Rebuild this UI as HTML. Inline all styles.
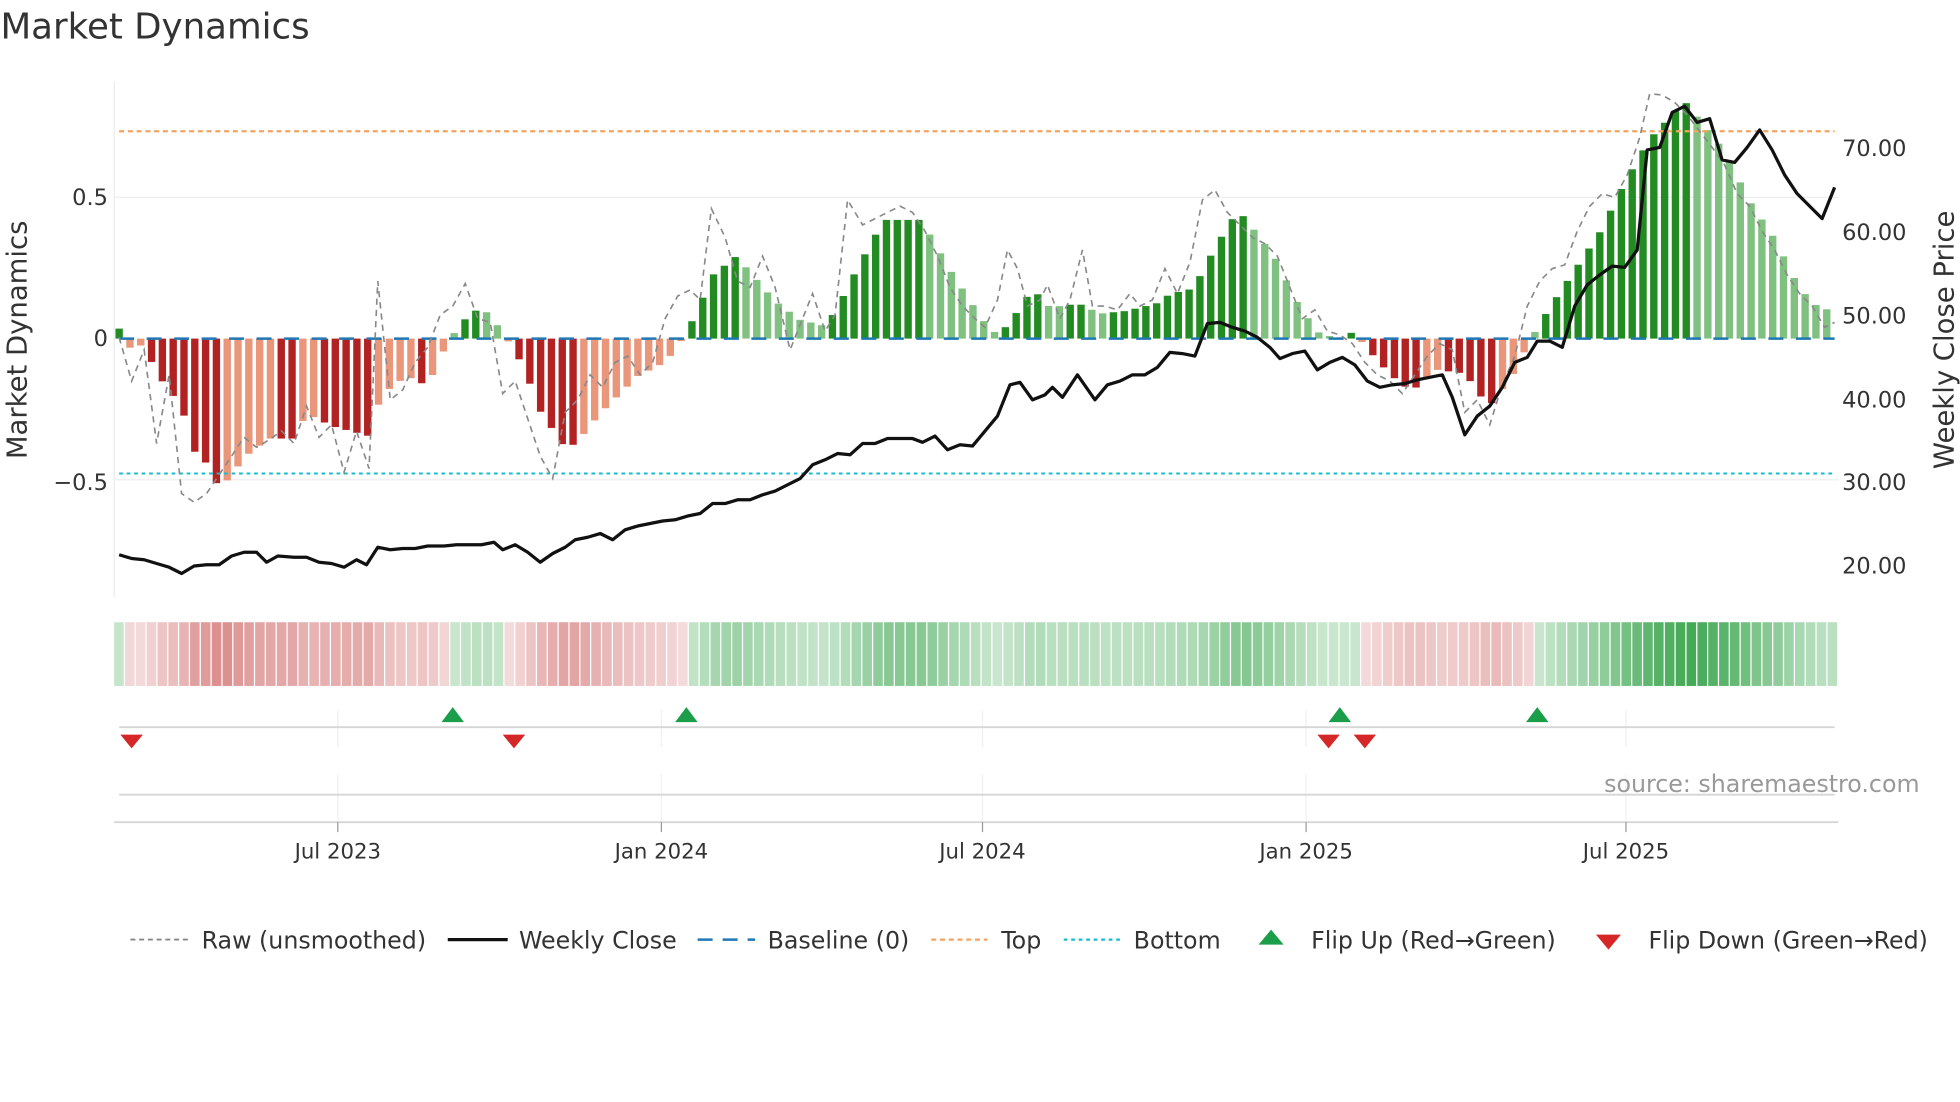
<!DOCTYPE html>
<html><head><meta charset="utf-8">
<style>
html,body{margin:0;padding:0;background:#fff;width:1960px;height:1102px;overflow:hidden}
svg{display:block}
text{font-family:"DejaVu Sans","Liberation Sans",sans-serif;fill:#333}
</style></head>
<body>
<svg id="s" width="1960" height="1102" viewBox="0 0 1568 882" xmlns="http://www.w3.org/2000/svg">
<text x="0" y="31" font-size="28.5">Market Dynamics</text>
<line x1="91" y1="65" x2="91" y2="478" stroke="#ececec"/>
<line x1="91" y1="158" x2="1471" y2="158" stroke="#eeeeee"/>
<line x1="91" y1="384" x2="1471" y2="384" stroke="#eeeeee"/>
<g id="bars"></g>
<g id="heat"></g>
<line x1="95" y1="271" x2="1468" y2="271" stroke="#1f77b4" stroke-width="2" stroke-dasharray="12,10"/>
<line x1="95" y1="105" x2="1468" y2="105" stroke="#f4a460" stroke-width="1.8" stroke-dasharray="4,3"/>
<line x1="95" y1="379" x2="1468" y2="379" stroke="#17becf" stroke-width="1.6" stroke-dasharray="3,3"/>
<polyline id="raw" fill="none" stroke="#888" stroke-width="1.3" stroke-dasharray="5,4"/>
<polyline id="close" fill="none" stroke="#111" stroke-width="2.6" stroke-linejoin="round"/>
<g font-size="18" text-anchor="end">
<text x="86" y="164">0.5</text><text x="86" y="277">0</text><text x="86" y="392">−0.5</text>
</g>
<g font-size="18">
<text x="1474" y="125">70.00</text><text x="1474" y="192">60.00</text><text x="1474" y="259">50.00</text>
<text x="1474" y="326">40.00</text><text x="1474" y="392">30.00</text><text x="1474" y="459">20.00</text>
</g>
<text transform="translate(21,272) rotate(-90)" font-size="22" text-anchor="middle">Market Dynamics</text>
<text transform="translate(1563,272) rotate(-90)" font-size="22" text-anchor="middle">Weekly Close Price</text>
<g stroke="#eef0f2" stroke-width="1">
<line x1="270" y1="568" x2="270" y2="598"/><line x1="529" y1="568" x2="529" y2="598"/><line x1="786" y1="568" x2="786" y2="598"/><line x1="1045" y1="568" x2="1045" y2="598"/><line x1="1301" y1="568" x2="1301" y2="598"/>
<line x1="270" y1="620" x2="270" y2="658"/><line x1="529" y1="620" x2="529" y2="658"/><line x1="786" y1="620" x2="786" y2="658"/><line x1="1045" y1="620" x2="1045" y2="658"/><line x1="1301" y1="620" x2="1301" y2="658"/>
</g>
<line x1="95" y1="582" x2="1468" y2="582" stroke="#d6d6d6" stroke-width="1.5"/>
<line x1="95" y1="636" x2="1468" y2="636" stroke="#d6d6d6" stroke-width="1.5"/>
<line x1="91" y1="658" x2="1471" y2="658" stroke="#d6d6d6" stroke-width="1.5"/>
<g stroke="#999" stroke-width="1"><line x1="270" y1="658" x2="270" y2="666"/><line x1="529" y1="658" x2="529" y2="666"/><line x1="786" y1="658" x2="786" y2="666"/><line x1="1045" y1="658" x2="1045" y2="666"/><line x1="1301" y1="658" x2="1301" y2="666"/></g>
<g fill="#1a9e4a">
<polygon points="362,566 371,578 353,578"/><polygon points="549,566 558,578 540,578"/><polygon points="1072,566 1081,578 1063,578"/><polygon points="1230,566 1239,578 1221,578"/>
</g>
<g fill="#d62728">
<polygon points="96,588 114,588 105,599"/><polygon points="402,588 420,588 411,599"/><polygon points="1054,588 1072,588 1063,599"/><polygon points="1083,588 1101,588 1092,599"/>
</g>
<text x="1536" y="634" font-size="19" text-anchor="end" style="fill:#999">source: sharemaestro.com</text>
<g font-size="17" text-anchor="middle">
<text x="270" y="687">Jul 2023</text><text x="529" y="687">Jan 2024</text><text x="786" y="687">Jul 2024</text><text x="1045" y="687">Jan 2025</text><text x="1301" y="687">Jul 2025</text>
</g>
<g font-size="19">
<line x1="104" y1="752" x2="150" y2="752" stroke="#888" stroke-width="1.5" stroke-dasharray="4,3"/>
<text x="161" y="759">Raw (unsmoothed)</text>
<line x1="358" y1="752" x2="406" y2="752" stroke="#111" stroke-width="2.6"/>
<text x="415" y="759">Weekly Close</text>
<line x1="558" y1="752" x2="604" y2="752" stroke="#1f77b4" stroke-width="2" stroke-dasharray="12,8"/>
<text x="614" y="759">Baseline (0)</text>
<line x1="745" y1="752" x2="790" y2="752" stroke="#f4a460" stroke-width="1.8" stroke-dasharray="4,3"/>
<text x="801" y="759">Top</text>
<line x1="851" y1="752" x2="896" y2="752" stroke="#17becf" stroke-width="1.8" stroke-dasharray="3,3"/>
<text x="907" y="759">Bottom</text>
<polygon points="1017,744 1027,756 1007,756" fill="#1a9e4a"/>
<text x="1049" y="759">Flip Up (Red→Green)</text>
<polygon points="1277,748 1297,748 1287,760" fill="#d62728"/>
<text x="1319" y="759">Flip Down (Green→Red)</text>
</g>
</svg>
<script>
var NS="http://www.w3.org/2000/svg";
var kp=[[95,8],[100,-8],[115,-5],[125,-28],[145,-55],[155,-90],[165,-100],[175,-120],[185,-110],[195,-95],[215,-80],[235,-80],[245,-60],[265,-70],[295,-78],[305,-45],[325,-30],[342,-38],[352,-15],[360,0],[370,14],[385,26],[400,8],[410,-8],[420,-25],[430,-55],[450,-85],[460,-85],[480,-60],[510,-30],[530,-20],[540,-10],[549,5],[559,25],[569,50],[589,66],[620,30],[640,15],[660,10],[670,25],[685,55],[707,95],[737,95],[760,55],[786,15],[796,5],[806,10],[816,25],[826,40],[840,25],[863,28],[880,20],[900,22],[925,28],[935,35],[945,38],[955,40],[965,60],[985,95],[993,100],[1005,85],[1020,65],[1040,25],[1055,5],[1070,0],[1082,5],[1092,-5],[1102,-18],[1122,-38],[1132,-40],[1150,-25],[1172,-28],[1191,-55],[1210,-30],[1225,0],[1240,25],[1260,55],[1280,85],[1300,125],[1320,160],[1348,190],[1360,175],[1380,150],[1400,110],[1420,80],[1440,40],[1455,25],[1468,22]];
function interp(x){for(var i=1;i<kp.length;i++){if(x<=kp[i][0]){var a=kp[i-1],b=kp[i];return a[1]+(b[1]-a[1])*(x-a[0])/(b[0]-a[0]);}}return kp[kp.length-1][1];}
var bars=document.getElementById("bars"),heat=document.getElementById("heat");
var step=8.65,n=159,prev=0;
for(var i=0;i<n;i++){var cx=95+i*step;var v=interp(cx);var inc=Math.abs(v)>=Math.abs(prev);prev=v;
var r=document.createElementNS(NS,"rect");var w=5.9;r.setAttribute("x",cx-w/2);r.setAttribute("width",w);
if(v>=0){r.setAttribute("y",271-v);r.setAttribute("height",v);}else{r.setAttribute("y",271);r.setAttribute("height",-v);}
var col=v>=0?(inc?"#228b22":"#80c080"):(inc?"#b22222":"#e9967a");r.setAttribute("fill",col);bars.appendChild(r);
var h=document.createElementNS(NS,"rect");var x0=91+i*(1380/n);h.setAttribute("x",x0);h.setAttribute("width",1380/n-1);h.setAttribute("y",498);h.setAttribute("height",51);
var c,a;if(v>=0){a=0.25+0.65*Math.min(1,v/190);c="rgba(46,160,67,"+a+")";}else{a=0.2+0.45*Math.min(1,-v/120);c="rgba(200,80,80,"+a+")";}
h.setAttribute("fill",c);heat.appendChild(h);}
var close=[95,444,105,447,115,448,125,451,135,454,145,459,155,453,165,452,175,452,185,445,195,442,205,442,213,450,222,445,235,446,245,446,255,450,265,451,275,454,285,448,293,452,302,438,312,440,322,439,332,439,342,437,355,437,365,436,375,436,385,436,395,434,402,440,412,436,422,442,432,450,442,443,452,438,460,432,470,430,480,427,490,432,500,424,510,421,520,419,530,417,540,416,550,413,560,411,570,403,580,403,590,400,600,400,610,396,620,393,630,388,640,383,650,372,660,368,670,363,680,364,690,355,700,355,710,351,720,351,730,351,738,354,748,349,758,360,768,356,778,357,788,345,798,333,808,308,816,306,826,320,836,316,842,310,850,318,862,300,876,320,886,308,896,305,906,300,916,300,926,294,936,282,946,283,956,285,966,259,976,258,986,262,996,265,1006,270,1016,278,1024,287,1034,283,1044,281,1054,296,1064,290,1074,286,1084,292,1094,305,1104,310,1114,308,1124,307,1134,304,1144,302,1154,300,1162,318,1172,348,1182,333,1192,325,1202,310,1212,290,1222,286,1230,273,1240,273,1250,278,1260,245,1270,228,1280,220,1290,213,1300,214,1310,200,1318,120,1328,118,1338,90,1348,85,1358,98,1368,95,1378,128,1388,130,1398,118,1408,104,1418,120,1428,140,1438,155,1448,165,1458,175,1468,150];
var raw=[95,270,105,305,115,280,125,355,135,300,145,395,155,402,165,395,175,380,185,365,195,350,205,358,215,352,225,345,235,355,245,325,255,350,265,340,275,378,285,345,295,375,302,225,312,320,322,312,332,290,342,278,352,252,362,245,372,227,382,255,392,258,402,315,412,305,422,335,432,365,442,383,452,330,462,320,472,300,482,310,492,290,502,285,512,300,522,290,532,255,542,237,552,232,560,240,569,167,580,190,590,225,600,230,610,205,620,230,632,280,640,260,650,235,660,265,668,252,678,160,690,180,700,175,710,170,720,165,730,170,740,185,750,205,760,230,770,245,780,255,788,262,798,240,806,200,814,215,822,245,832,240,838,228,848,255,856,240,866,200,874,245,884,245,894,248,904,235,912,245,922,240,932,215,942,235,952,210,962,160,972,152,982,170,992,180,1002,190,1012,195,1022,205,1032,230,1042,255,1052,248,1062,265,1072,268,1082,275,1092,290,1102,300,1112,305,1122,315,1132,300,1142,285,1152,275,1162,280,1172,330,1182,320,1192,340,1202,308,1212,285,1222,245,1232,225,1242,215,1252,212,1262,185,1272,165,1282,155,1292,158,1302,140,1312,110,1320,75,1330,76,1340,82,1350,92,1360,105,1370,118,1380,132,1390,155,1400,165,1410,185,1420,200,1430,220,1440,235,1450,245,1460,262,1468,258];
function pts(a){var s=[];for(var i=0;i<a.length;i+=2)s.push(a[i]+","+a[i+1]);return s.join(" ");}
document.getElementById("close").setAttribute("points",pts(close));
document.getElementById("raw").setAttribute("points",pts(raw));
</script>
</body></html>
